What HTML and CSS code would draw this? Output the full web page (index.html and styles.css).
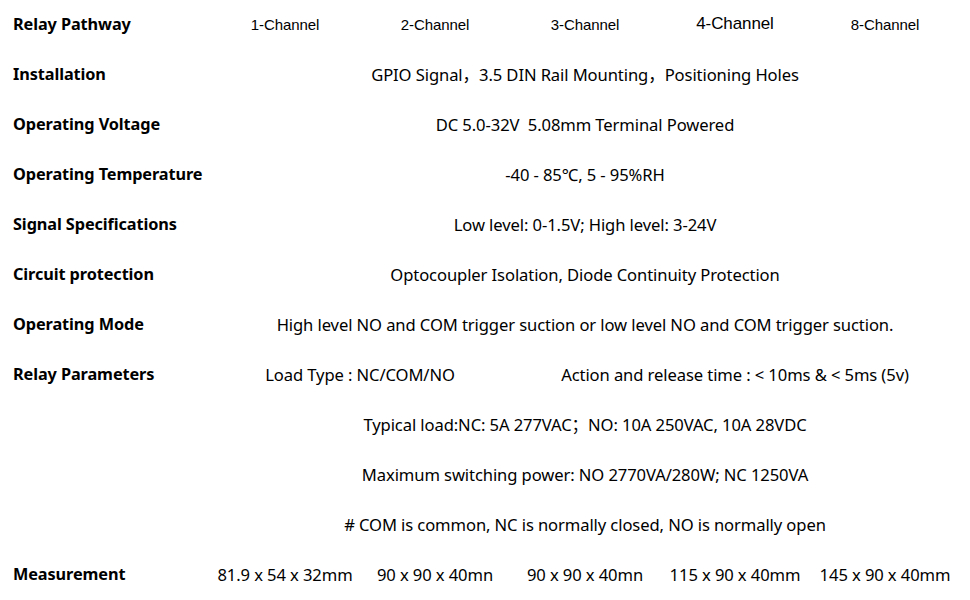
FILE: index.html
```html
<!DOCTYPE html>
<html lang="en">
<head>
  <meta charset="UTF-8" />
  <meta name="viewport" content="width=device-width, initial-scale=1.0"/>
  <title>Relay Module Specifications</title>
  <link rel="stylesheet" href="styles.css">
</head>
<body>

  <table class="spec">
    <colgroup>
      <col class="col-label">
      <col><col><col><col><col>
    </colgroup>
    <tr>
      <th>Relay Pathway</th>
      <td class="arial">1-Channel</td>
      <td class="arial">2-Channel</td>
      <td class="arial">3-Channel</td>
      <td class="arial big">4-Channel</td>
      <td class="arial">8-Channel</td>
    </tr>
    <tr>
      <th>Installation</th>
      <td colspan="5">GPIO Signal，3.5 DIN Rail Mounting，Positioning Holes</td>
    </tr>
    <tr>
      <th>Operating Voltage</th>
      <td colspan="5">DC 5.0-32V&nbsp; 5.08mm Terminal Powered</td>
    </tr>
    <tr>
      <th>Operating Temperature</th>
      <td colspan="5">-40 - 85℃, 5 - 95%RH</td>
    </tr>
    <tr>
      <th>Signal Specifications</th>
      <td colspan="5">Low level: 0-1.5V; High level: 3-24V</td>
    </tr>
    <tr>
      <th>Circuit protection</th>
      <td colspan="5">Optocoupler Isolation, Diode Continuity Protection</td>
    </tr>
    <tr>
      <th>Operating Mode</th>
      <td colspan="5">High level NO and COM trigger suction or low level NO and COM trigger suction.</td>
    </tr>
    <tr>
      <th>Relay Parameters</th>
      <td colspan="2">Load Type : NC/COM/NO</td>
      <td colspan="3">Action and release time : &lt; 10ms &amp; &lt; 5ms (5v)</td>
    </tr>
    <tr>
      <th></th>
      <td colspan="5">Typical load:NC: 5A 277VAC；NO: 10A 250VAC, 10A 28VDC</td>
    </tr>
    <tr>
      <th></th>
      <td colspan="5">Maximum switching power: NO 2770VA/280W; NC 1250VA</td>
    </tr>
    <tr>
      <th></th>
      <td colspan="5"># COM is common, NC is normally closed, NO is normally open</td>
    </tr>
    <tr>
      <th>Measurement</th>
      <td>81.9 x 54 x 32mm</td>
      <td>90 x 90 x 40mn</td>
      <td>90 x 90 x 40mn</td>
      <td>115 x 90 x 40mm</td>
      <td>145 x 90 x 40mm</td>
    </tr>
  </table>

</body>
</html>
```

FILE: styles.css
```css
body {
  margin: 0;
  background: #fff;
  color: #000;
  font-family: "Noto Sans", "Noto Sans CJK SC", sans-serif;
  font-size: 16.6px;
}
.spec {
  border-collapse: collapse;
  table-layout: fixed;
  width: 960px;
}
.col-label {
  width: 210px;
}
.spec th,
.spec td {
  height: 48px;
  padding: 0 0 2px;
  text-align: center;
  white-space: nowrap;
  font-weight: normal;
  letter-spacing: -0.1px;
}
.spec th {
  text-align: left;
  padding-left: 13px;
  font-weight: bold;
  font-size: 16.3px;
}
.arial {
  font-family: "Liberation Sans", Arial, sans-serif;
  font-size: 15px;
  letter-spacing: 0;
}
.big {
  font-size: 17px;
}
```
